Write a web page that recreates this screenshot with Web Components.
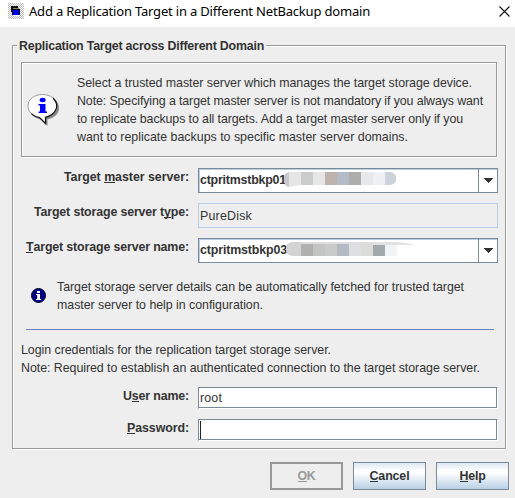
<!DOCTYPE html>
<html lang="en">
<head>
<meta charset="utf-8">
<title>Add a Replication Target</title>
<style>
html, body { margin: 0; width: 515px; height: 498px; overflow: hidden; background: #eee; }
body { font: 12.4px/18px "Liberation Sans", Arial, sans-serif; color: #333; }
</style>
</head>
<body>
<replication-dialog></replication-dialog>
<script>
function define(name, html, setup) {
  const t = document.createElement('template');
  t.innerHTML = html;
  customElements.define(name, class extends HTMLElement {
    connectedCallback() {
      if (this.shadowRoot) return;
      this.attachShadow({ mode: 'open' }).append(t.content.cloneNode(true));
      if (setup) setup(this, this.shadowRoot);
    }
  });
}

/* One line of text whose tracking is adjusted to the width given in "w". */
define('text-line', `<style>
:host { display: block; height: 18px; line-height: 18px; white-space: pre; }
span { display: inline-block; }
</style><span><slot></slot></span>`, (el, root) => {
  const s = root.querySelector('span');
  const w = +el.getAttribute('w'), n = el.textContent.length;
  const natural = s.getBoundingClientRect().width;
  if (natural && n) s.style.letterSpacing = (w - natural) / n + 'px';
  el.style.width = w + 'px';
});

define('title-bar', `<style>
:host { display: flex; align-items: flex-start; height: 27px; background: #fff; color: #000; padding: 3px 5px 0 8px; box-sizing: border-box; font: 13px/18px "Noto Sans", sans-serif; }
svg { flex: none; display: block; }
.close { margin: 3px 0 0 auto; }
text-line { margin: -1px 0 0 5px; }
</style>
<svg width="16" height="16" shape-rendering="crispEdges"><defs><pattern id="c" width="2" height="2" patternUnits="userSpaceOnUse"><path fill="#fff" d="M0 0h2v2H0z"/><path fill="#bcbcbc" d="M0 0h1v1H0zM1 1h1v1H1z"/></pattern></defs>
<path fill="url(#c)" d="M0 0h16v16H0z"/><path fill="#111" d="M3 3h7v2H5v4H3z"/><path fill="#858585" d="M5 5h6v3H5z"/><path fill="#fff" d="M5 7h7v6H5z"/><path fill="#000" d="M4 6h8v6H4z"/><path fill="#0000f0" d="M5 7h6v5H5z"/></svg>
<text-line w="341">Add a Replication Target in a Different NetBackup domain</text-line>
<svg class="close" width="11" height="11"><path d="M.5 .5l10 10M10.5 .5l-10 10" stroke="#111" stroke-width="1.1"/></svg>`);

/* Etched border: a grey line with a white line below and to the right of it. */
define('etched-group', `<style>
:host { display: block; position: relative; box-sizing: border-box; }
.a, .b { position: absolute; box-sizing: border-box; border: 1px solid #fff; inset: 1px 0 0 1px; }
.b { border-color: #999; inset: 0 1px 1px 0; }
.legend { position: absolute; left: 5px; top: -8px; background: #eee; padding: 0 2px 0 2px; font-weight: bold; }
.body { position: relative; }
</style><div class="a"></div><div class="b"></div><div class="legend"><slot name="legend"></slot></div><div class="body"><slot></slot></div>`, (el, root) => {
  if (!el.querySelector('[slot=legend]')) root.querySelector('.legend').remove();
});

define('speech-icon', `<style>:host { display: block; } svg { display: block; }</style>
<svg width="34" height="34" viewBox="0 0 34 34">
<path d="M17 3c8.500 0 15 5 15 12 0 6-5 10-11.500 11.500V33l-7-6.500C7 25 3 21 3 15 3 8 9 3 17 3z" fill="#888"/>
<path d="M15.500 1.500C23.500 1.500 30 6 30 13c0 6-5 10-11.500 11.300v6.200L12.500 24.500C5.500 23 1 19 1 13 1 6 7.500 1.500 15.500 1.500z" fill="#fff" stroke="#999"/>
<path d="M26 5c8 8 2 17-7.500 19.300v6.200L12.500 24.500C9.500 24 6.500 23 4.500 20.500" fill="none" stroke="#111" stroke-width="1.2"/>
<ellipse cx="15.600" cy="7" rx="3" ry="2.200" fill="#00f"/><path d="M12 11h6.500v7.500H20V20h-8.500v-1.500H13v-6h-1.500V11z" fill="#00f"/></svg>`);

define('info-icon', `<style>:host { display: block; } svg { display: block; }</style>
<svg width="15" height="15" viewBox="0 0 15 15"><circle cx="7.500" cy="7.500" r="7" fill="#000080" stroke="#000038"/><path fill="#fff" d="M6 3h3v2H6zM5 6h4v5h1.200v1H5v-1h1.200V7H5z"/></svg>`);

define('form-row', `<style>
:host { display: grid; grid-template-columns: 177px 300px; column-gap: 9px; align-items: start; }
.l { display: flex; justify-content: flex-end; font-weight: bold; }
</style><div class="l"><slot name="label"></slot></div><slot></slot>`);

define('combo-box', `<style>
:host { display: flex; position: relative; box-sizing: border-box; width: 300px; height: 25px; border: 1px solid #7a8a99; background: #fff; font-weight: bold; box-shadow: inset 1px 1px #b8cfe5; }
.v { flex: 1; padding: 2px 0 0 1px; }
.b { width: 19px; box-sizing: border-box; border-left: 1px solid #7a8a99; box-shadow: inset 0 1px #b8cfe5; }
svg { display: block; margin: 9px 0 0 4px; }
.m { position: absolute; left: 85px; top: 2px; }
</style><div class="v"><slot></slot></div><div class="b"><svg width="10" height="5" shape-rendering="crispEdges"><path d="M0 0h10L5 5z" fill="#333"/></svg></div><div class="m"><slot name="mask"></slot></div>`);

define('mask-one', `<style>:host, svg { display: block; } svg { margin: 0; }</style>
<svg width="112" height="17"><defs><clipPath id="p"><path d="M5 1h101a6 6 0 0 1 0 13H16L5 16Q0 15 0 9V5Q1 2 5 1z"/></clipPath></defs>
<g clip-path="url(#p)"><path fill="#c8c8cc" d="M0 0h5v17H0z"/><path fill="#e5e5e5" d="M5 0h12v17H5z"/><path fill="#cacccb" d="M17 0h12v17H17z"/><path fill="#e6e6e6" d="M29 0h12v17H29z"/><path fill="#bdb3ae" d="M41 0h12v17H41z"/><path fill="#b5bbc6" d="M53 0h12v17H53z"/><path fill="#adaeac" d="M65 0h12v17H65z"/><path fill="#e7e8e9" d="M77 0h12v17H77z"/><path fill="#edf0f4" d="M89 0h12v17H89z"/><path fill="#cdd2da" d="M101 0h11v17h-11z"/></g></svg>`);

define('mask-two', `<style>:host, svg { display: block; }</style>
<svg width="132" height="17"><defs><clipPath id="p"><path d="M8 1h97q18 0 25 3H113v11H8Q2 14 2 8 2 2 8 1z"/></clipPath></defs>
<g clip-path="url(#p)"><path fill="#d3d3d3" d="M0 0h17v17H0z"/><path fill="#b0b0af" d="M17 0h12v17H17z"/><path fill="#c3c4c4" d="M29 0h12v17H29z"/><path fill="#cacaca" d="M41 0h12v17H41z"/><path fill="#b4bac4" d="M53 0h12v17H53z"/><path fill="#dedfe0" d="M65 0h12v17H65z"/><path fill="#dcdcdb" d="M77 0h12v17H77z"/><path fill="#a2a9ac" d="M89 4h12v13H89z"/><path fill="#f1f4f7" d="M101 4h12v13h-12z"/><path fill="#dedede" d="M17 0h72v3H17z"/><path fill="#e2e2e2" d="M89 0h43v4H89z"/></g></svg>`);

define('text-field', `<style>
:host { display: block; box-sizing: border-box; width: 300px; height: 22px; padding: 1px 0 0 1px; border: 1px solid; border-color: #7a8a99 #fff #fff #7a8a99; background: #fff; box-shadow: inset -1px -1px #7a8a99; position: relative; }
:host([readonly]) { height: 25px; padding: 3px 0 0 1px; border-color: #b8cfe5; background: #eee; box-shadow: none; }
i { display: none; width: 1px; height: 18px; margin-left: 0; background: #222; }
:host([focused]) i { display: block; }
</style><i></i><slot></slot>`);

define('push-button', `<style>
:host { display: flex; justify-content: center; box-sizing: border-box; width: 73px; height: 28px; padding-top: 4px; border: 1px solid #7a8a99; font-weight: bold; background: linear-gradient(#dde8f3, #fff 30%, #fff 38%, #b8cfe5); }
:host([disabled]) { background: #eee; color: #999; border: 2px solid #999; padding-top: 3px; }
</style><slot></slot>`);

define('replication-dialog', `<style>
:host { display: flex; flex-direction: column; width: 515px; height: 498px; background: #eee; }
* { box-sizing: border-box; }
u { text-decoration: none; box-shadow: inset 0 -1px #333; display: inline-block; height: 15px; line-height: 18px; vertical-align: top; }
push-button[disabled] u { box-shadow: inset 0 -1px #999; }
.outer { width: 495px; height: 405px; margin: 18px 0 0 12px; }
.notice { width: 477px; height: 96px; margin: 17px 0 0 9px; }
.n { display: flex; padding: 12px 0 0 6px; }
.n speech-icon { margin: 19px 16px 0 0; }
.form { display: flex; flex-direction: column; gap: 10px; margin-top: 10px; }
.form form-row { height: 25px; }
.tip { display: flex; margin: 15px 0 0 19px; }
.tip info-icon { margin: 10px 11px 0 0; }
.rule { height: 1px; width: 468px; background: #6382bf; margin: 15px 0 0 14px; }
.login { margin: 11px 0 0 9px; }
.cred { display: flex; flex-direction: column; gap: 10px; margin-top: 10px; }
.buttons { display: flex; justify-content: flex-end; gap: 10px; padding-right: 6px; margin-top: 12px; }
</style>
<title-bar></title-bar>
<etched-group class="outer"><text-line slot="legend" w="245">Replication Target across Different Domain</text-line>
<etched-group class="notice"><div class="n"><speech-icon></speech-icon><div>
<text-line w="395">Select a trusted master server which manages the target storage device.</text-line>
<text-line w="406">Note: Specifying a target master server is not mandatory if you always want</text-line>
<text-line w="386">to replicate backups to all targets. Add a target master server only if you</text-line>
<text-line w="331">want to replicate backups to specific master server domains.</text-line>
</div></div></etched-group>
<div class="form">
<form-row><text-line slot="label" w="125">Target <u>m</u>aster server:</text-line><combo-box><text-line w="86">ctpritmstbkp01</text-line><mask-one slot="mask"></mask-one></combo-box></form-row>
<form-row><text-line slot="label" w="155">Target storage server t<u>y</u>pe:</text-line><text-field readonly><text-line w="52">PureDisk</text-line></text-field></form-row>
<form-row><text-line slot="label" w="163"><u>T</u>arget storage server name:</text-line><combo-box><text-line w="87">ctpritmstbkp03</text-line><mask-two slot="mask"></mask-two></combo-box></form-row>
</div>
<div class="tip"><info-icon></info-icon><div>
<text-line w="407">Target storage server details can be automatically fetched for trusted target</text-line>
<text-line w="206">master server to help in configuration.</text-line></div></div>
<div class="rule"></div>
<div class="login"><text-line w="310">Login credentials for the replication target storage server.</text-line>
<text-line w="459">Note: Required to establish an authenticated connection to the target storage server.</text-line></div>
<div class="cred">
<form-row><text-line slot="label" w="66">U<u>s</u>er name:</text-line><text-field><text-line w="22">root</text-line></text-field></form-row>
<form-row><text-line slot="label" w="62"><u>P</u>assword:</text-line><text-field focused></text-field></form-row>
</div>
</etched-group>
<div class="buttons">
<push-button disabled><text-line w="18"><u>O</u>K</text-line></push-button>
<push-button><text-line w="40"><u>C</u>ancel</text-line></push-button>
<push-button><text-line w="26"><u>H</u>elp</text-line></push-button>
</div>`);
</script>
</body>
</html>
